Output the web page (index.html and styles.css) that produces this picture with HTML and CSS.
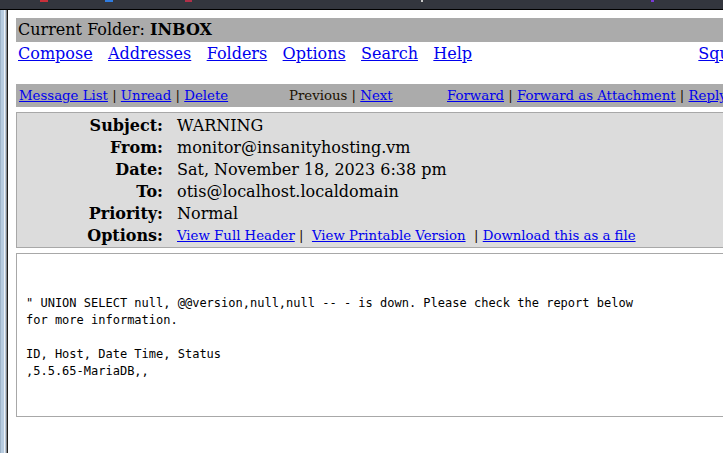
FILE: index.html
```html
<!DOCTYPE html>
<html>
<head>
<meta charset="utf-8">
<title>SquirrelMail - Read Message</title>
<link rel="stylesheet" href="styles.css">
</head>
<body>
<div class="chrome">
  <span class="bit red"></span>
  <span class="bit blue"></span>
  <span class="bit pink"></span>
  <span class="bit white"></span>
  <span class="bit purple"></span>
</div>
<div class="frame">
  <div class="edge"></div>
  <div class="page">
    <div class="folderbar">Current Folder: <b>INBOX</b></div>
    <div class="menurow">
      <nav class="menu">
        <a href="#">Compose</a>
        <a href="#">Addresses</a>
        <a href="#">Folders</a>
        <a href="#">Options</a>
        <a href="#">Search</a>
        <a href="#">Help</a>
      </nav>
      <a class="brand" href="#">SquirrelMail</a>
    </div>
    <div class="msgbar">
      <div class="grp"><a href="#">Message List</a> | <a href="#">Unread</a> | <a href="#">Delete</a></div>
      <div class="grp">Previous | <a href="#">Next</a></div>
      <div class="grp"><a href="#">Forward</a> | <a href="#">Forward as Attachment</a> | <a href="#">Reply</a> | <a href="#">Reply All</a></div>
    </div>
    <div class="hdrbox">
      <div class="lbl">Subject:</div><div class="val">WARNING</div>
      <div class="lbl">From:</div><div class="val">monitor@insanityhosting.vm</div>
      <div class="lbl">Date:</div><div class="val">Sat, November 18, 2023 6:38 pm</div>
      <div class="lbl">To:</div><div class="val">otis@localhost.localdomain</div>
      <div class="lbl">Priority:</div><div class="val">Normal</div>
      <div class="lbl">Options:</div>
      <div class="val opts"><a href="#">View Full Header</a>&nbsp;|&nbsp; <a href="#">View Printable Version</a>&nbsp; | <a href="#">Download this as a file</a></div>
    </div>
    <div class="bodybox"><pre class="msg">" UNION SELECT null, @@version,null,null -- - is down. Please check the report below
for more information.

ID, Host, Date Time, Status
,5.5.65-MariaDB,,</pre></div>
  </div>
</div>
</body>
</html>
```
FILE: styles.css
```css
html, body {
  margin: 0;
  padding: 0;
  background: #ffffff;
  overflow: hidden;
  width: 723px;
  height: 453px;
}
body {
  font-family: "DejaVu Serif", serif;
  font-size: 16px;
  color: #000;
}
a { color: #0000ee; text-decoration: underline; }

.chrome {
  height: 9px;
  background: #33363e;
  border-bottom: 1px solid #000;
  display: flex;
  align-items: flex-start;
}
.bit { display: block; height: 2px; }
.bit.red { width: 8px; margin-left: 40px; background: #c8303a; }
.bit.blue { width: 8px; margin-left: 57px; background: #2f7ce0; }
.bit.pink { width: 7px; margin-left: 72px; background: #b03048; }
.bit.white { width: 2px; margin-left: 229px; background: #c8c8c8; }
.bit.purple { width: 3px; margin-left: 228px; background: #7a3ad8; }

.frame {
  display: flex;
  height: 443px;
}
.edge {
  flex: 0 0 8px;
  background: linear-gradient(to right,
    #9db3c8 0 1px, #b8cce0 1px 4px, #eef2f6 4px 5px,
    #b8c8da 5px 6px, #8a8a8a 6px 7px, #1e1e1e 7px 8px);
}
.page {
  flex: 0 0 785px;
  padding: 8px 0 0 8px;
}

.folderbar {
  background: #ababab;
  height: 24px;
  line-height: 24px;
  padding-left: 2px;
}

.menurow {
  display: flex;
  justify-content: space-between;
  height: 23px;
  line-height: 23px;
  padding-left: 2px;
  margin-bottom: 19px;
}
.menu { display: flex; gap: 15.4px; }

.msgbar {
  background: #ababab;
  height: 23px;
  line-height: 23px;
  font-size: 13.3px;
  padding-left: 3px;
  display: grid;
  grid-template-columns: 270px 158px 1fr;
  white-space: nowrap;
  color: #1a1000;
}

.hdrbox {
  margin-top: 5px;
  background: #dcdcdc;
  border: 1px solid #a8a8a8;
  padding: 2px 0 0;
  display: grid;
  grid-template-columns: 146px 1fr;
  column-gap: 14px;
  grid-auto-rows: 22px;
  line-height: 22px;
}
.lbl { text-align: right; font-weight: bold; }
.val { white-space: nowrap; }
.opts { font-size: 13.3px; color: #1a1000; }

.bodybox {
  margin-top: 5px;
  border: 1px solid #a8a8a8;
  height: 162px;
}
.msg {
  margin: 0;
  padding: 41px 0 0 9px;
  font-family: "DejaVu Sans Mono", monospace;
  font-size: 12px;
  line-height: 17px;
  color: #000;
}
```
